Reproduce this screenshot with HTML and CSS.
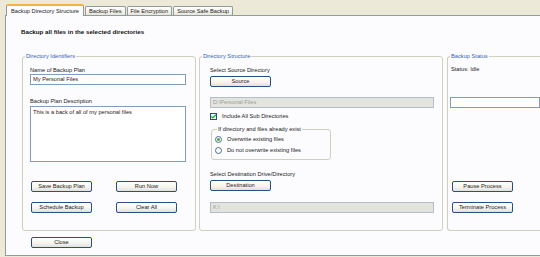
FILE: index.html
```html
<!DOCTYPE html>
<html>
<head>
<meta charset="utf-8">
<link rel="stylesheet" href="styles.css">
</head>
<body>
<div class="window">
  <div class="tabs">
    <div class="tab active">Backup Directory Structure</div>
    <div class="tab">Backup Files</div>
    <div class="tab">File Encryption</div>
    <div class="tab">Source Safe Backup</div>
  </div>
  <div class="panel">
    <h1 class="heading">Backup all files in the selected directories</h1>
    <div class="groups">
      <fieldset class="group">
        <legend>Directory Identifiers</legend>
        <div class="gbody g1">
          <div class="lbl">Name of Backup Plan</div>
          <div class="input name">My Personal Files</div>
          <div class="lbl desc-lbl">Backup Plan Description</div>
          <div class="input textarea">This is a back of all of my personal files</div>
          <div class="btn-grid">
            <button class="btn">Save Backup Plan</button>
            <button class="btn">Run Now</button>
            <button class="btn">Schedule Backup</button>
            <button class="btn">Clear All</button>
          </div>
        </div>
      </fieldset>
      <fieldset class="group">
        <legend>Directory Structure</legend>
        <div class="gbody g2">
          <div class="lbl">Select Source Directory</div>
          <button class="btn btn-top">Source</button>
          <div class="input disabled path">D:\Personal Files</div>
          <div class="check-row">
            <span class="checkbox"><svg width="7" height="7" viewBox="0 0 7 7"><path d="M1.3 3.4 L2.8 4.9 L5.8 1.8" fill="none" stroke="#21a121" stroke-width="1.3"/></svg></span>
            <span>Include All Sub Directories</span>
          </div>
          <fieldset class="inner">
            <legend>If directory and files already exist</legend>
            <div class="radio-row"><span class="radio on"></span><span>Overwrite existing files</span></div>
            <div class="radio-row second"><span class="radio"></span><span>Do not overwrite existing files</span></div>
          </fieldset>
          <div class="lbl dest-lbl">Select Destination Drive/Directory</div>
          <button class="btn btn-top">Destination</button>
          <div class="input disabled path dest">K:\</div>
        </div>
      </fieldset>
      <fieldset class="group last">
        <legend>Backup Status</legend>
        <div class="gbody g3">
          <div class="lbl">Status: Idle</div>
          <div class="input status"></div>
          <div class="stack">
            <button class="btn">Pause Process</button>
            <button class="btn">Terminate Process</button>
          </div>
        </div>
      </fieldset>
    </div>
    <button class="btn close">Close</button>
  </div>
</div>
</body>
</html>
```
FILE: styles.css
```css
* { box-sizing: border-box; }
html, body {
  margin: 0;
  padding: 0;
  width: 540px;
  height: 257px;
  overflow: hidden;
  background: #ece9d8;
  font-family: "Liberation Sans", "DejaVu Sans", Arial, sans-serif;
  font-size: 5.7px;
  color: #222;
}
.window {
  padding: 4px 0 0 5px;
}
.tabs {
  display: flex;
  align-items: flex-end;
  height: 11px;
  padding-left: 1px;
  position: relative;
  z-index: 2;
}
.tab {
  height: 9px;
  line-height: 8px;
  padding: 0 3px;
  border: 1px solid #919b9c;
  border-bottom: none;
  border-radius: 2px 2px 0 0;
  background: linear-gradient(#ffffff, #f3f2ec 60%, #e6e4da);
  white-space: nowrap;
  margin-right: 1px;
}
.tab.active {
  height: 12px;
  margin-bottom: -1px;
  padding: 0 4px;
  line-height: 10px;
  background: #fcfcfe;
  border-top: 2px solid #f4b33e;
}
.panel {
  width: 535px;
  height: 241px;
  border: 1px solid #919b9c;
  border-right: none;
  background: #fcfcfe;
  padding: 0 0 0 15px;
  position: relative;
  z-index: 1;
  overflow: hidden;
}
.heading {
  margin: 12px 0 0 0;
  font-size: 6.2px;
  line-height: 8px;
  font-weight: bold;
  color: #111;
}
.groups {
  display: grid;
  grid-template-columns: 174px 244px 94px;
  column-gap: 3px;
  margin: 16px 0 0 1px;
  height: 179px;
}
.groups > .group.last {
  margin-left: 1px;
  border-right: none;
  border-radius: 3px 0 0 3px;
}
fieldset {
  margin: 0;
  padding: 0;
  min-width: 0;
  border: 1px solid #d0d0bf;
  border-radius: 3px;
}
legend {
  margin-left: 2px;
  padding: 0 1px;
  line-height: 8px;
  color: #3462b8;
}
.gbody { display: flex; flex-direction: column; align-items: flex-start; }
.g1 { padding: 6px 7px 0 7px; }
.g2 { padding: 6px 0 0 10px; }
.g3 { padding: 5px 0 0 3px; }
.lbl { line-height: 8px; white-space: nowrap; }
.input {
  height: 11px;
  border: 1px solid #7f9db9;
  background: #fff;
  line-height: 9px;
  padding: 0 2px;
  white-space: nowrap;
  overflow: hidden;
}
.name { width: 156px; }
.desc-lbl { margin-top: 12px; }
.textarea { width: 156px; height: 56px; margin-top: 1px; padding-top: 1px; }
.btn-grid {
  display: grid;
  grid-template-columns: 61px 61px;
  column-gap: 24px;
  row-gap: 10px;
  margin: 19px 0 0 1px;
}
.btn {
  height: 11px;
  width: 61px;
  padding: 0;
  margin: 0;
  border: 1px solid #2b4f7e;
  border-radius: 2px;
  background: linear-gradient(#ffffff, #f6f5f0 55%, #e3e0d6);
  font-family: inherit;
  font-size: 5.7px;
  line-height: 9px;
  color: #222;
  white-space: nowrap;
}
.btn-top { margin-top: 2px; }
.disabled {
  background: #e4e4df;
  border-color: #b5bec8;
  color: #9c9c98;
}
.path { width: 224px; margin-top: 10px; }
.path.dest { margin-top: 11px; }
.check-row, .radio-row {
  display: flex;
  align-items: center;
  gap: 5px;
  height: 8px;
  white-space: nowrap;
}
.check-row { margin-top: 4px; }
.checkbox {
  width: 7px;
  height: 7px;
  border: 1px solid #1c5180;
  background: #fdfdfb;
  display: flex;
  align-items: center;
  justify-content: center;
}
.checkbox svg { display: block; flex: none; }
.inner {
  width: 120px;
  margin: 5px 0 0 1px;
  padding: 2px 0 5px 3px;
}
.inner legend { margin-left: 2px; color: #222; }
.radio-row.second { margin-top: 3px; }
.radio {
  width: 7px;
  height: 7px;
  border: 1px solid #4f6f8f;
  border-radius: 50%;
  background: #fafaf7;
  display: flex;
  align-items: center;
  justify-content: center;
}
.radio.on::after {
  content: "";
  width: 3px;
  height: 3px;
  border-radius: 50%;
  background: #4aa84a;
}
.dest-lbl { margin-top: 10px; }
.status { width: 90px; margin: 24px 0 0 -1px; }
.stack {
  display: flex;
  flex-direction: column;
  gap: 10px;
  margin: 73px 0 0 1px;
}
.close { margin: 6px 0 0 10px; display: block; }
```
